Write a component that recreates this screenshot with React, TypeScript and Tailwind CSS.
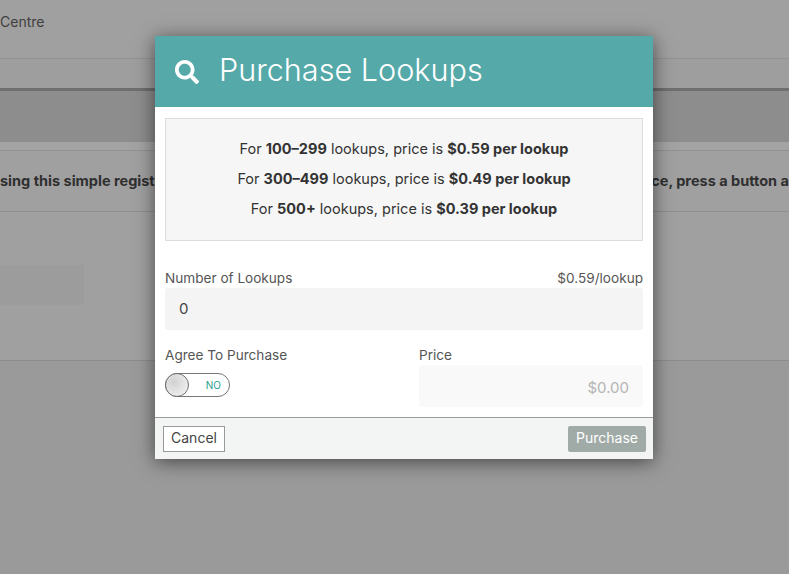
import { FaSearch } from "react-icons/fa";

const tiers = [
  { range: "100–299", price: "$0.59" },
  { range: "300–499", price: "$0.49" },
  { range: "500+", price: "$0.39" },
];

// 뒤쪽 페이지 (딤 처리된 상태)
function BackgroundPage() {
  return (
    <div className="flex h-[574px] flex-col overflow-hidden bg-[#a0a0a0]">
      <div className="h-[59px] border-b border-[#929292] pt-[13px] text-[14px] leading-[18px] text-[#3f3f3f]">
        Centre
      </div>
      <div className="h-[29px] bg-[#9e9e9e]" />
      <div className="h-[54px] border-t-[3px] border-[#6f6f6f] bg-[#8d8d8d]" />
      <div className="h-[9px] border-b border-[#929292] bg-[#a3a3a3]" />
      <div className="flex h-[61px] items-center justify-between overflow-hidden border-b border-[#909090] whitespace-nowrap text-[14.5px] font-bold text-[#2f2f2f]">
        <span>sing this simple registration</span>
        <span>ce, press a button a</span>
      </div>
      <div className="h-[149px] border-b border-[#8c8c8c] pt-[53px]">
        <div className="h-[40px] w-[84px] bg-[#9c9c9c]" />
      </div>
      <div className="flex-1 bg-[#9a9a9a]" />
    </div>
  );
}

function Toggle() {
  return (
    <div className="mt-[9px] flex h-[24px] w-[65px] items-center justify-between rounded-full border border-[#777] bg-white pr-[8px]">
      <span className="-ml-px h-[24px] w-[24px] rounded-full border-[1.5px] border-[#6f6f6f] bg-[radial-gradient(circle_at_35%_35%,#d2d2d2,#f6f6f6)]" />
      <span className="text-[10px] text-[#2a9d8f]">NO</span>
    </div>
  );
}

function PurchaseModal() {
  return (
    <div className="absolute top-[36px] left-[155px] flex h-[423px] w-[498px] flex-col bg-white text-[#3a3a3a] shadow-[0_3px_18px_rgba(0,0,0,0.55)]">
      <header className="flex h-[71px] items-center gap-[20px] bg-[#55a9a9] pb-[3px] pl-[20px] text-white">
        <FaSearch className="mt-[3px] h-[24px] w-[24px]" />
        <h1 className="text-[30.6px] leading-none font-light">Purchase Lookups</h1>
      </header>

      <div className="flex flex-1 flex-col px-[10px] pt-[11px]">
        <div className="flex h-[123px] flex-col items-center justify-center border border-[#dcdcdc] bg-[#f6f6f6] pb-[1px] text-[14.5px] leading-[30px] text-[#333]">
          {tiers.map((t) => (
            <p key={t.range}>
              For <b className="font-bold">{t.range}</b> lookups, price is{" "}
              <b className="font-bold">{t.price} per lookup</b>
            </p>
          ))}
        </div>

        <div className="mt-[28px] flex justify-between text-[13.6px] leading-[18px] text-[#555]">
          <label>Number of Lookups</label>
          <span>$0.59/lookup</span>
        </div>
        <div className="mt-px flex h-[42px] items-center rounded-[3px] bg-[#f4f4f4] pl-[14px] text-[15px] text-[#444]">
          0
        </div>

        <div className="mt-[16px] flex">
          <div className="w-[254px]">
            <label className="block text-[13.6px] leading-[18px] text-[#555]">Agree To Purchase</label>
            <Toggle />
          </div>
          <div className="flex-1">
            <label className="block text-[13.6px] leading-[18px] text-[#555]">Price</label>
            <div className="mt-px flex h-[42px] items-center justify-end rounded-[3px] bg-[#f9f9f9] pt-[4px] pr-[14px] text-[15px] text-[#b5b5b5]">
              $0.00
            </div>
          </div>
        </div>
      </div>

      <footer className="flex h-[42px] items-center justify-between border-t border-[#9a9a9a] bg-[#f3f4f4] pr-[7px] pl-[8px] text-[14px] leading-[18px]">
        <button className="h-[26px] w-[62px] border border-[#999] bg-white pb-[2px] text-[#444]">Cancel</button>
        <button className="h-[26px] w-[78px] rounded-[2px] bg-[#a0aaa6] pb-[2px] text-white">Purchase</button>
      </footer>
    </div>
  );
}

export default function App() {
  return (
    <div className="relative h-[574px] overflow-hidden font-['Inter',sans-serif]">
      <BackgroundPage />
      <PurchaseModal />
    </div>
  );
}
